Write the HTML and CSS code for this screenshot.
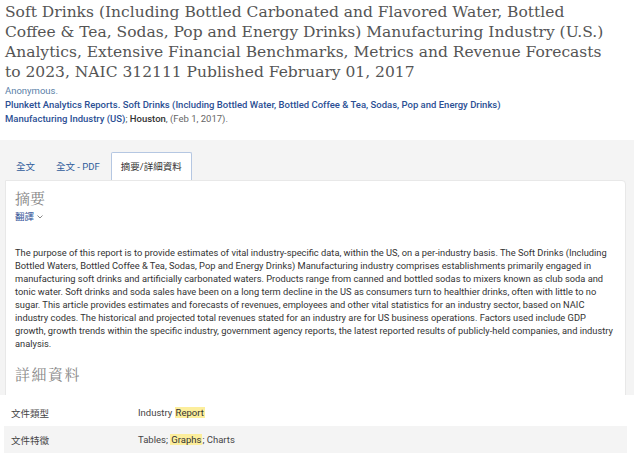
FILE: index.html
```html
<!DOCTYPE html>
<html lang="zh-Hant">
<head>
<meta charset="utf-8">
<title>Soft Drinks</title>
<link rel="stylesheet" href="styles.css">
</head>
<body>
<h1 class="title">Soft Drinks (Including Bottled Carbonated and Flavored Water, Bottled<br>Coffee &amp; Tea, Sodas, Pop and Energy Drinks) Manufacturing Industry (U.S.)<br>Analytics, Extensive Financial Benchmarks, Metrics and Revenue Forecasts<br>to 2023, NAIC 312111 Published February 01, 2017</h1>
<div class="meta">
  <div class="author">Anonymous.</div>
  <div class="source"><span class="pub">Plunkett Analytics Reports. Soft Drinks (Including Bottled Water, Bottled Coffee &amp; Tea, Sodas, Pop and Energy Drinks)</span><br><span class="pub">Manufacturing Industry (US)</span>; <b>Houston</b>, (Feb 1, 2017).</div>
</div>
<div class="tabarea">
  <div class="tabs">
    <a class="tab">全文</a>
    <a class="tab">全文 - PDF</a>
    <a class="tab active">摘要/詳細資料</a>
  </div>
  <div class="panel">
    <h2 class="heading">摘要</h2>
    <a class="translate">翻譯 <svg class="chev" width="6" height="4" viewBox="0 0 6 4"><path d="M0.5 0.5 L3 3 L5.5 0.5" fill="none" stroke="#888" stroke-width="1"/></svg></a>
    <p class="abstract">The purpose of this report is to provide estimates of vital industry-specific data, within the US, on a per-industry basis. The Soft Drinks (Including Bottled Waters, Bottled Coffee &amp; Tea, Sodas, Pop and Energy Drinks) Manufacturing industry comprises establishments primarily engaged in manufacturing soft drinks and artificially carbonated waters. Products range from canned and bottled sodas to mixers known as club soda and tonic water. Soft drinks and soda sales have been on a long term decline in the US as consumers turn to healthier drinks, often with little to no sugar. This article provides estimates and forecasts of revenues, employees and other vital statistics for an industry sector, based on NAIC industry codes. The historical and projected total revenues stated for an industry are for US business operations. Factors used include GDP growth, growth trends within the specific industry, government agency reports, the latest reported results of publicly-held companies, and industry analysis.</p>
    <h2 class="heading details">詳細資料</h2>
  </div>
</div>
<div class="table">
  <div class="row">
    <div class="label">文件類型</div>
    <div class="value">Industry <mark>Report</mark></div>
  </div>
  <div class="row alt">
    <div class="label">文件特徵</div>
    <div class="value">Tables; <mark>Graphs</mark>; Charts</div>
  </div>
</div>
</body>
</html>
```
FILE: styles.css
```css
html, body {
  margin: 0;
  padding: 0;
  background: #fff;
}
body {
  font-family: Roboto, "Noto Sans CJK TC", sans-serif;
  color: #333;
  width: 637px;
  overflow: hidden;
}
.title {
  font-family: "DejaVu Serif", serif;
  font-weight: normal;
  font-size: 15.5px;
  line-height: 20px;
  color: #555;
  margin: 0;
  padding: 2px 2px 0 5px;
  white-space: nowrap;
}
.meta {
  padding: 2px 5px 0 5px;
  font-size: 9.5px;
  line-height: 14px;
  color: #666;
}
.author {
  color: #5b7fa8;
}
.pub {
  color: #2b4f94;
  font-weight: 500;
}
.source b {
  font-weight: 500;
  color: #333;
}
.tabarea {
  margin-top: 14px;
  background: #f4f4f4;
  height: 255px;
  overflow: hidden;
  padding: 12px 8px 0 5px;
  box-sizing: border-box;
  width: 634px;
}
.tabs {
  display: flex;
  height: 28px;
  padding-left: 2px;
}
.tab {
  font-size: 9.5px;
  color: #2f5b9a;
  padding: 0 8px;
  line-height: 27px;
  border: 1px solid transparent;
  border-bottom: none;
  margin-right: 3px;
}
.tab.active {
  background: #fff;
  color: #333;
  border-color: #b5c7e2;
  border-radius: 2px 2px 0 0;
  padding: 0 9px;
  margin-left: -1px;
}
.panel {
  background: #fff;
  border: 1px solid #e8e8e8;
  border-radius: 0 4px 0 0;
  padding: 8px 10px 0 9px;
  height: 300px;
}
.heading {
  font-family: "Noto Serif CJK TC", "DejaVu Serif", serif;
  font-weight: normal;
  font-size: 15px;
  line-height: 18px;
  color: #888;
  margin: 0;
}
.translate {
  display: flex;
  align-items: center;
  gap: 3px;
  font-size: 9.5px;
  line-height: 14px;
  color: #2b4f94;
  margin-top: 3px;
}
.abstract {
  font-size: 9.3px;
  line-height: 13px;
  color: #333;
  margin: 22px 0 0 0;
}
.details {
  margin-top: 14px;
  font-size: 15px;
  line-height: 20px;
  letter-spacing: 1.5px;
}
.table {
  padding: 4px 10px 0 4px;
}
.row {
  display: flex;
  height: 27px;
  align-items: center;
  font-size: 9.5px;
  color: #444;
}
.row.alt {
  background: #f4f4f4;
}
.label {
  width: 127px;
  padding-left: 7px;
}
mark {
  background: #fcee9c;
  color: #333;
  padding: 0 1px;
}
```
